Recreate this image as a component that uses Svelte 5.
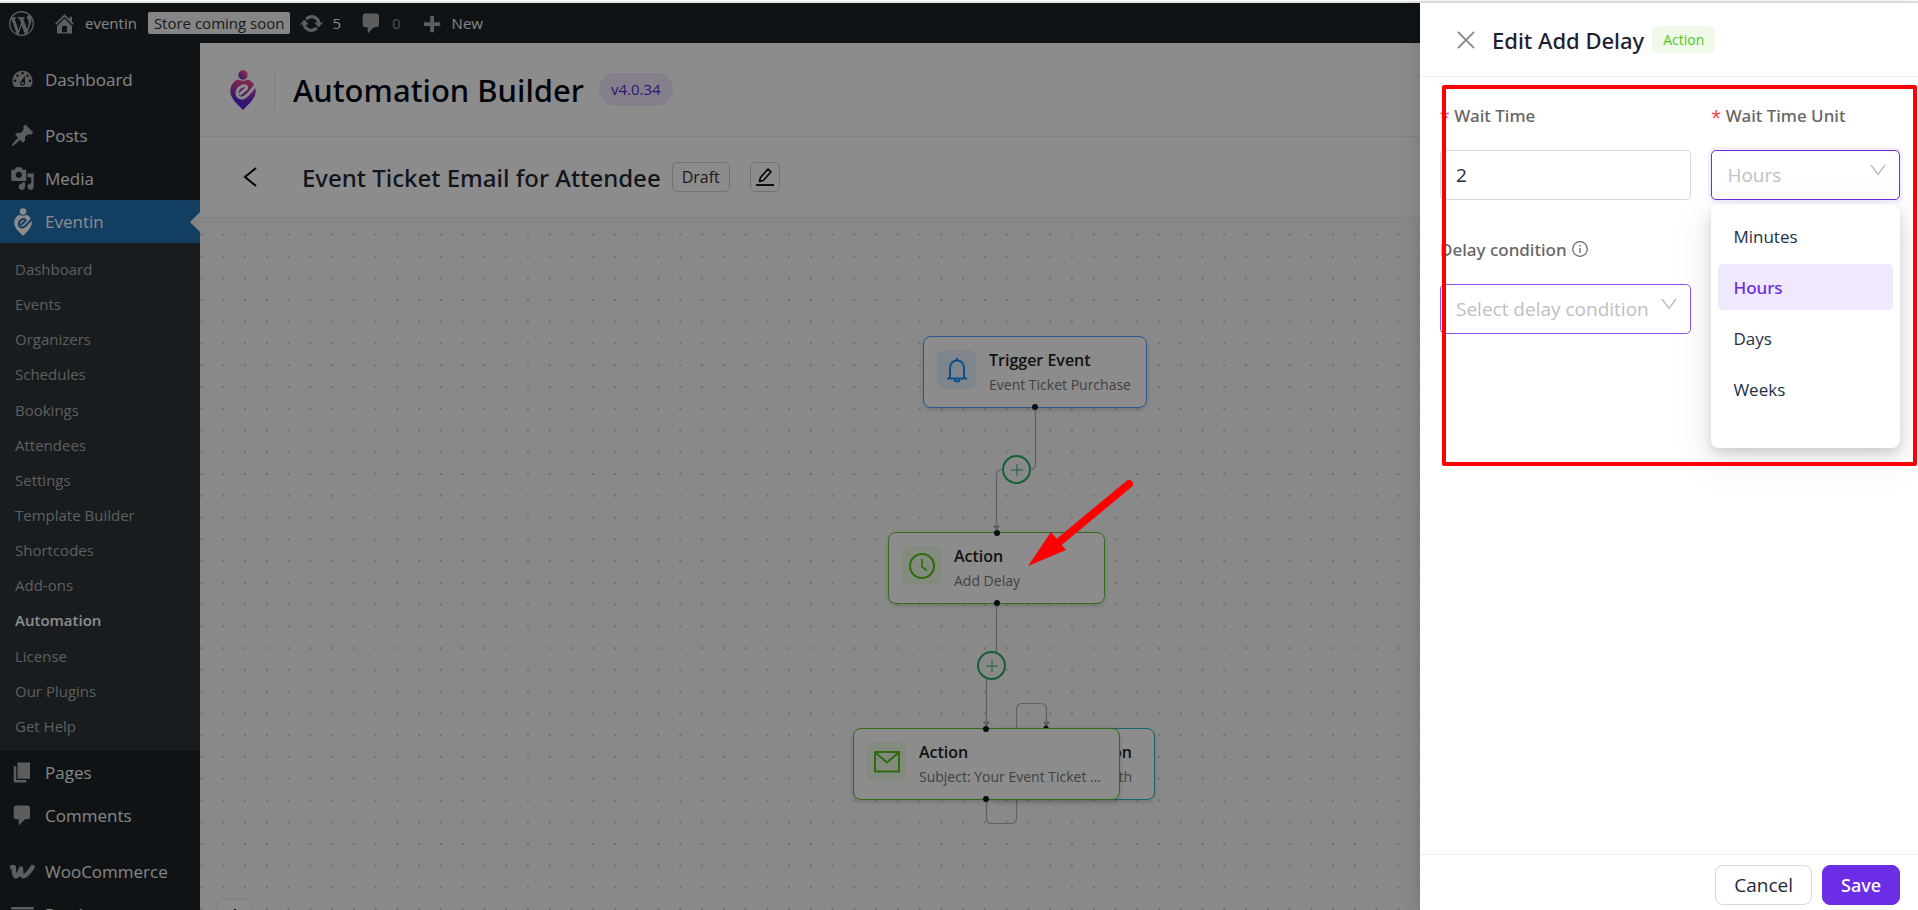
<script lang="ts">
	type NavItem = { label: string; icon: string; active?: boolean; gap?: boolean };

	const icons: Record<string, string> = {
		wordpress:
			'M20 10c0-5.51-4.49-10-10-10C4.48 0 0 4.49 0 10c0 5.52 4.48 10 10 10 5.51 0 10-4.48 10-10zM7.78 15.37L4.37 6.22c.55-.02 1.17-.08 1.17-.08.5-.06.44-1.13-.06-1.11 0 0-1.45.11-2.37.11-.18 0-.37 0-.58-.01C4.12 2.69 6.87 1.11 10 1.11c2.33 0 4.45.87 6.05 2.34-.68-.11-1.65.39-1.65 1.58 0 .74.45 1.36.9 2.1.35.61.55 1.36.55 2.46 0 1.49-1.4 5-1.4 5l-3.03-8.37c.54-.02.82-.17.82-.17.5-.05.44-1.25-.06-1.22 0 0-1.44.12-2.38.12-.87 0-2.33-.12-2.33-.12-.5-.03-.56 1.2-.06 1.22l.92.08 1.26 3.41zM17.41 10c.24-.64.74-1.87.43-4.25.7 1.29 1.05 2.71 1.05 4.25 0 3.29-1.73 6.24-4.4 7.78.97-2.59 1.94-5.2 2.92-7.78zM6.1 18.09C3.12 16.65 1.11 13.53 1.11 10c0-1.3.23-2.48.72-3.59C3.25 10.3 4.67 14.2 6.1 18.09zm4.03-6.63l2.58 6.98c-.86.29-1.76.45-2.71.45-.79 0-1.57-.11-2.29-.33.81-2.38 1.62-4.74 2.42-7.1z',
		home: 'M16 8.5l1.53 1.53-1.06 1.06L10 4.6l-6.47 6.49-1.06-1.06L10 2.5l4 4v-2h2v4zm-6-2.46l6 5.99V18H4v-5.97zM12 17v-5H8v5h4z',
		update:
			'M10.2 3.28c3.53 0 6.43 2.61 6.92 6h2.08l-3.5 4-3.5-4h2.32c-.45-1.97-2.21-3.45-4.32-3.45-1.45 0-2.73.71-3.54 1.78L4.95 5.66C6.23 4.2 8.11 3.28 10.2 3.28zm-.4 13.44c-3.52 0-6.43-2.61-6.92-6H.8l3.5-4c1.17 1.33 2.33 2.67 3.5 4H5.48c.45 1.97 2.21 3.45 4.32 3.45 1.45 0 2.73-.71 3.54-1.78l1.71 1.95c-1.28 1.46-3.15 2.38-5.25 2.38z',
		comments: 'M5 2h9c1.1 0 2 .9 2 2v7c0 1.1-.9 2-2 2h-2l-5 5v-5H5c-1.1 0-2-.9-2-2V4c0-1.1.9-2 2-2z',
		plus: 'M17 9v3h-5v5H9v-5H4V9h5V4h3v5h5z',
		dashboard:
			'M3.76 16h12.48A7.998 7.998 0 0 0 10 3a7.998 7.998 0 0 0-6.24 13zM10 4c.55 0 1 .45 1 1s-.45 1-1 1-1-.45-1-1 .45-1 1-1zM6 6c.55 0 1 .45 1 1s-.45 1-1 1-1-.45-1-1 .45-1 1-1zm8 0c.55 0 1 .45 1 1s-.45 1-1 1-1-.45-1-1 .45-1 1-1zm-5.37 5.55L12 7v6c0 1.1-.9 2-2 2s-2-.9-2-2c0-.57.24-1.08.63-1.45zM4 10c.55 0 1 .45 1 1s-.45 1-1 1-1-.45-1-1 .45-1 1-1zm12 0c.55 0 1 .45 1 1s-.45 1-1 1-1-.45-1-1 .45-1 1-1zm-5 3c0-.55-.45-1-1-1s-1 .45-1 1 .45 1 1 1 1-.45 1-1z',
		posts: 'M10.44 3.02l1.82-1.82 6.36 6.35-1.83 1.82c-1.05-.68-2.48-.57-3.41.36l-.75.75c-.92.93-1.04 2.35-.35 3.41l-1.83 1.82-2.41-2.41-2.8 2.79c-.42.42-3.38 2.71-3.8 2.29s1.86-3.39 2.28-3.81l2.79-2.79L4.1 9.36l1.83-1.82c1.05.69 2.48.57 3.4-.36l.75-.75c.93-.92 1.05-2.35.36-3.41z',
		media: 'M13 11V4c0-.55-.45-1-1-1h-1.67L9 1H5L3.67 3H2c-.55 0-1 .45-1 1v7c0 .55.45 1 1 1h10c.55 0 1-.45 1-1zM7 4.5c1.38 0 2.5 1.12 2.5 2.5S8.38 9.5 7 9.5 4.5 8.38 4.5 7 5.62 4.5 7 4.5zM14 6h5v10.5c0 1.38-1.12 2.5-2.5 2.5S14 17.88 14 16.5s1.12-2.5 2.5-2.5c.17 0 .34.02.5.05V9h-3V6zm-4 8.05V13h2v3.5c0 1.38-1.12 2.5-2.5 2.5S7 17.88 7 16.5 8.12 14 9.5 14c.17 0 .34.02.5.05z',
		pages: 'M6 15V2h10v13H6zm-1 1h8v2H3V5h2v11z',
		products: 'M19 4v2H1V4h18zM2 7h16v10H2V7zm11 3V9H7v1h6z'
	};

	const topNav: NavItem[] = [
		{ label: 'Dashboard', icon: 'dashboard' },
		{ label: 'Posts', icon: 'posts', gap: true },
		{ label: 'Media', icon: 'media' },
		{ label: 'Eventin', icon: 'eventin', active: true }
	];

	const bottomNav: NavItem[] = [
		{ label: 'Pages', icon: 'pages' },
		{ label: 'Comments', icon: 'comments' },
		{ label: 'WooCommerce', icon: 'woo', gap: true },
		{ label: 'Products', icon: 'products' }
	];

	const subNav = [
		'Dashboard',
		'Events',
		'Organizers',
		'Schedules',
		'Bookings',
		'Attendees',
		'Settings',
		'Template Builder',
		'Shortcodes',
		'Add-ons',
		'Automation',
		'License',
		'Our Plugins',
		'Get Help'
	];

	// positions are in canvas coordinates
	const nodes = [
		{ x: 723, y: 118, w: 224, kind: 'trigger', title: 'Trigger Event', text: 'Event Ticket Purchase' },
		{ x: 688, y: 314, w: 217, kind: 'delay', title: 'Action', text: 'Add Delay' },
		{ x: 790, y: 510, w: 165, kind: 'condition', title: 'Condition', text: 'Check both' },
		{ x: 653, y: 510, w: 267, kind: 'email', title: 'Action', text: 'Subject: Your Event Ticket Purchase' }
	];

	const handles = [
		[835, 189],
		[797, 315],
		[797, 385],
		[786, 511],
		[786, 581]
	];

	const adders = [
		[816, 251],
		[791, 447]
	];

	const units = ['Minutes', 'Hours', 'Days', 'Weeks'];

	let waitTime = $state('2');
	let unit = $state('Hours');
	let condition = $state('');
	let unitOpen = $state(true);
	let drawerOpen = $state(true);

	function pick(value: string) {
		unit = value;
		unitOpen = false;
	}
</script>

{#snippet brand()}
	<circle class="brand-dot" cx="13" cy="5" r="4.700" />
	<path
		class="brand-pin"
		d="M13 40C8 34.500 .3 29 .3 21C.3 15.500 3.500 11.500 7.800 9.500C11 11.300 15 11.300 18.200 9.500C22.500 11.500 25.700 15.500 25.700 21C25.700 29 18 34.500 13 40Z" />
	<path
		class="brand-cut"
		fill="none"
		stroke-width="3"
		stroke-linejoin="round"
		d="M9.500 24.500L16.500 18.500Q17.500 15.500 13.500 15.800Q7.500 17.300 7 23Q7.500 28.500 12.500 28Q16 27 20.500 21.500L26 15" />
{/snippet}

{#snippet icon(name: string)}
	{#if name === 'eventin'}
		<svg viewBox="0 0 26 40" width="18" height="28" aria-hidden="true">{@render brand()}</svg>
	{:else if name === 'woo'}
		<svg viewBox="0 0 25 16" width="25" height="16" aria-hidden="true">
			<path
				d="M2 3.200H3.800Q3.600 12 6 12.500Q8 12.500 11 4.500Q10.800 12 13.500 12.300Q16.500 12 22.500 3.200"
				fill="none"
				stroke="currentColor"
				stroke-width="4.500"
				stroke-linecap="round"
				stroke-linejoin="round" />
		</svg>
	{:else}
		<svg viewBox="0 0 20 20" width="25" height="25" aria-hidden="true"><path d={icons[name]} /></svg>
	{/if}
{/snippet}

{#snippet navItem(item: NavItem)}
	<li class:gap={item.gap}>
		<a href="#{item.label}" class="nav-item" class:active={item.active}>
			<span class="nav-icon">{@render icon(item.icon)}</span>
			{item.label}
		</a>
	</li>
{/snippet}

{#snippet chevron()}
	<svg class="chevron" viewBox="0 0 16 12" width="16" height="12" aria-hidden="true">
		<path d="M1 1L8 10.500L15 1" fill="none" stroke="currentColor" stroke-width="1.500" />
	</svg>
{/snippet}

<div class="screen">
	<div class="admin">
		<header class="adminbar">
			<a href="#about" aria-label="About WordPress">{@render icon('wordpress')}</a>
			<a href="#site" class="site">{@render icon('home')} eventin</a>
			<a href="#store" class="store">Store coming soon</a>
			<a href="#updates" class="updates">{@render icon('update')} 5</a>
			<a href="#comments" class="count">{@render icon('comments')} <span>0</span></a>
			<a href="#new" class="new">{@render icon('plus')} New</a>
		</header>

		<div class="columns">
			<nav class="sidebar">
				<ul>
					{#each topNav as item}
						{@render navItem(item)}
					{/each}
				</ul>
				<ul class="subnav">
					{#each subNav as label}
						<li><a href="#{label}" class:current={label === 'Automation'}>{label}</a></li>
					{/each}
				</ul>
				<ul>
					{#each bottomNav as item}
						{@render navItem(item)}
					{/each}
				</ul>
			</nav>

			<main>
				<header class="app-header">
					<svg class="logo" viewBox="0 0 26 40" width="26" height="40" aria-hidden="true">
						<defs>
							<linearGradient id="dot" x1="1" y1="0" x2="0" y2="1">
								<stop offset="0.200" stop-color="#ff4f86" />
								<stop offset="1" stop-color="#5a2be8" />
							</linearGradient>
							<linearGradient id="pin" gradientUnits="userSpaceOnUse" x1="17" y1="8" x2="12" y2="38">
								<stop offset="0" stop-color="#ff4f7d" />
								<stop offset="0.800" stop-color="#5b24d8" />
							</linearGradient>
						</defs>
						{@render brand()}
					</svg>
					<span class="divider"></span>
					<h1>Automation Builder</h1>
					<span class="version">v4.0.34</span>
				</header>

				<div class="flow-bar">
					<button class="back" aria-label="Back">
						<svg viewBox="0 0 14 20" width="14" height="20">
							<path d="M13 1L2 10L13 19" fill="none" stroke="currentColor" stroke-width="2" />
						</svg>
					</button>
					<h2>Event Ticket Email for Attendee</h2>
					<span class="draft">Draft</span>
					<button class="edit" aria-label="Rename">
						<svg viewBox="0 0 20 20" width="20" height="20">
							<path
								d="M4.500 14.500L5.300 10.800L13 2L16 4.800L8.300 13.500Z"
								fill="none"
								stroke="currentColor"
								stroke-width="1.600"
								stroke-linejoin="round" />
							<path d="M1 18H19" stroke="currentColor" stroke-width="1.800" />
						</svg>
					</button>
				</div>

				<div class="canvas">
					<svg class="layer" aria-hidden="true">
						<defs>
							<pattern id="grid" width="21.760" height="21.760" patternUnits="userSpaceOnUse" x="-9.300" y="5.800">
								<circle cx="10.880" cy="10.880" r="0.700" fill="#77777f" />
							</pattern>
						</defs>
						<rect width="100%" height="100%" fill="url(#grid)" />
						<g class="edges">
							<path d="M835.500 190V246Q835.500 251.500 830 251.500H802Q796.500 251.500 796.500 257V312" />
							<path d="M796.500 386V448H786.500V508" />
							<path
								d="M786.500 581V600Q786.500 605.500 792 605.500H811Q816.500 605.500 816.500 600V491Q816.500 485.500 822 485.500H840Q846.500 485.500 846.500 491V504" />
						</g>
						<g class="tips">
							<path d="M793.500 308H799.500L796.500 312Z" />
							<path d="M783.500 504H789.500L786.500 508Z" />
							<path d="M843.500 504H849.500L846.500 508Z" />
						</g>
						<circle cx="846" cy="510" r="2.500" fill="#16161f" />
					</svg>

					{#each nodes as node}
						<article class="node {node.kind}" style="left: {node.x}px; top: {node.y}px; width: {node.w}px;">
							<span class="node-icon">
								{#if node.kind === 'trigger'}
									<svg viewBox="0 0 20 26" width="20" height="26">
										<path d="M10 1V4M3 21V10.500A7 7 0 0 1 17 10.500V21M0 21.500H20" />
										<path d="M7.500 22A2.500 2.500 0 0 0 12.500 22" />
									</svg>
								{:else if node.kind === 'delay'}
									<svg viewBox="0 0 26 26" width="26" height="26">
										<circle cx="13" cy="13" r="12" />
										<path d="M13 6V14L18 17.500" stroke-width="1.600" />
									</svg>
								{:else if node.kind === 'email'}
									<svg viewBox="0 0 26 22" width="26" height="22">
										<path d="M1 1H25V20.500H1ZM2 2L13 11.500L24 2" />
									</svg>
								{/if}
							</span>
							<div class="node-text">
								<strong>{node.title}</strong>
								<small>{node.text}</small>
							</div>
						</article>
					{/each}

					{#each handles as [x, y]}
						<span class="handle" style="left: {x}px; top: {y}px;"></span>
					{/each}

					{#each adders as [x, y]}
						<button class="add" style="left: {x}px; top: {y}px;" aria-label="Add step">
							<svg viewBox="0 0 12 12" width="12" height="12"><path d="M6 0V12M0 6H12" stroke="currentColor" /></svg>
						</button>
					{/each}

					<button class="zoom-in" aria-label="Zoom in">
						<svg viewBox="0 0 12 12" width="14" height="14">
							<path d="M6 0V12M0 6H12" stroke="currentColor" stroke-width="2" />
						</svg>
					</button>
				</div>
			</main>
		</div>
	</div>

	{#if drawerOpen}
		<div class="mask"></div>

		<svg class="pointer" viewBox="0 0 110 90" width="110" height="90" aria-hidden="true">
			<path d="M105 8L35 66" stroke="#f00" stroke-width="8" stroke-linecap="round" />
			<path d="M4 90L27 56L42 74Z" fill="#f00" />
		</svg>

		<aside class="drawer">
			<header>
				<button class="close" aria-label="Close" onclick={() => (drawerOpen = false)}>
					<svg viewBox="0 0 18 18" width="18" height="18">
						<path d="M1 1L17 17M17 1L1 17" stroke="currentColor" stroke-width="1.800" />
					</svg>
				</button>
				<h2>Edit Add Delay</h2>
				<span class="tag">Action</span>
			</header>

			<form class="fields">
				<div class="field">
					<label for="wait-time"><span class="star">*</span>Wait Time</label>
					<input id="wait-time" type="text" bind:value={waitTime} />
				</div>

				<div class="field">
					<label for="wait-unit"><span class="star">*</span>Wait Time Unit</label>
					<div class="picker">
						<button
							type="button"
							id="wait-unit"
							class="select-box"
							class:focused={unitOpen}
							aria-haspopup="listbox"
							aria-expanded={unitOpen}
							onclick={() => (unitOpen = !unitOpen)}>
							{unit}
						</button>
						{@render chevron()}
						{#if unitOpen}
							<ul class="options" role="listbox">
								{#each units as option}
									<li role="option" aria-selected={option === unit}>
										<button type="button" class:selected={option === unit} onclick={() => pick(option)}>{option}</button>
									</li>
								{/each}
							</ul>
						{/if}
					</div>
				</div>

				<div class="field">
					<label for="condition">
						Delay condition
						<svg viewBox="0 0 16 16" width="16" height="16" aria-hidden="true">
							<circle cx="8" cy="8" r="7.300" fill="none" stroke="currentColor" stroke-width="1.200" />
							<path d="M8 7V12M8 4V5.500" stroke="currentColor" stroke-width="1.300" />
						</svg>
					</label>
					<div class="picker">
						<select id="condition" class="select-box" bind:value={condition}>
							<option value="">Select delay condition</option>
						</select>
						{@render chevron()}
					</div>
				</div>

				<div class="highlight"></div>
			</form>

			<footer>
				<button class="cancel" onclick={() => (drawerOpen = false)}>Cancel</button>
				<button class="save">Save</button>
			</footer>
		</aside>
	{/if}
</div>

<style>
	:global(body) {
		margin: 0;
		overflow: hidden;
	}

	.screen {
		position: relative;
		box-sizing: border-box;
		height: 100vh;
		padding-top: 3px;
		overflow: hidden;
		background: linear-gradient(#fdfdfd 1px, #e2e4e3 1px);
		font-family: 'Open Sans', 'Noto Sans', sans-serif;
		color: #1d2327;
	}

	.screen *,
	.screen *::before,
	.screen *::after {
		box-sizing: border-box;
	}

	ul {
		margin: 0;
		padding: 0;
		list-style: none;
	}

	h1,
	h2 {
		margin: 0;
		font-family: 'Noto Sans', 'Open Sans', sans-serif;
		font-weight: 500;
	}

	a {
		color: inherit;
		text-decoration: none;
	}

	button {
		font: inherit;
		cursor: pointer;
	}

	svg {
		flex: none;
		fill: currentColor;
	}

	.admin {
		display: flex;
		flex-direction: column;
		height: 100%;
	}

	/* admin bar */

	.adminbar {
		display: flex;
		align-items: center;
		flex: none;
		height: 40px;
		padding-left: 9px;
		background: #1d2327;
		color: #f0f0f1;
		font-size: 15px;
	}

	.adminbar a {
		display: flex;
		align-items: center;
		gap: 8px;
	}

	.adminbar svg {
		color: #a7aaad;
	}

	.adminbar .site {
		margin-left: 18px;
	}

	.adminbar .store {
		height: 22px;
		margin-left: 11px;
		padding: 0 6px;
		border-radius: 2px;
		background: #f0f2f0;
		color: #2c3338;
	}

	.adminbar .updates {
		margin-left: 9px;
	}

	.adminbar .count {
		margin-left: 18px;
	}

	.adminbar .count span {
		color: #8c8f94;
	}

	.adminbar .new {
		margin-left: 18px;
	}

	.columns {
		display: flex;
		flex: 1;
		min-height: 0;
	}

	/* sidebar */

	.sidebar {
		flex: none;
		width: 200px;
		padding-top: 15px;
		background: #1d2327;
		color: #f0f0f1;
		overflow: hidden;
	}

	.gap {
		margin-top: 13px;
	}

	.nav-item {
		position: relative;
		display: flex;
		align-items: center;
		gap: 10px;
		height: 43px;
		padding-left: 10px;
		font-size: 17px;
	}

	.nav-icon {
		display: flex;
		justify-content: center;
		width: 25px;
		color: #a7aaad;
	}

	.nav-item.active {
		background: #2271b1;
		color: #fff;
	}

	.active .nav-icon {
		color: #fff;
	}

	.brand-cut {
		stroke: #2271b1;
	}

	.nav-item.active::after {
		content: '';
		position: absolute;
		right: 0;
		border: 10px solid transparent;
		border-right-color: #f0f0f1;
		border-left-width: 0;
	}

	.subnav {
		display: flex;
		flex-direction: column;
		justify-content: space-between;
		min-height: 508px;
		padding: 9px 0 7px;
		background: #2c3338;
		color: #a9acaf;
		font-size: 15px;
	}

	.subnav a {
		display: block;
		padding-left: 15px;
		line-height: 35px;
	}

	.subnav .current {
		color: #fff;
		font-weight: 600;
	}

	/* main column */

	main {
		display: flex;
		flex: 1;
		flex-direction: column;
		min-width: 0;
		background: #fff;
	}

	.app-header {
		display: flex;
		align-items: center;
		flex: none;
		height: 94px;
		padding-left: 30px;
		border-bottom: 1px solid #eeeeee;
	}

	.logo .brand-dot {
		fill: url(#dot);
	}

	.logo .brand-pin {
		fill: url(#pin);
	}

	.logo .brand-cut {
		stroke: #fff;
	}

	.divider {
		width: 1px;
		height: 40px;
		margin: 0 18px;
		background: #e8e8e8;
	}

	h1 {
		color: #020617;
		font-size: 31px;
	}

	.version {
		margin-left: 15px;
		padding: 0 12px;
		border-radius: 17px;
		background: #f0e8fd;
		color: #5030d8;
		font-size: 15px;
		line-height: 33px;
	}

	.flow-bar {
		display: flex;
		align-items: center;
		flex: none;
		height: 81px;
		padding-left: 36px;
		border-bottom: 1px solid #e8eaec;
	}

	.back,
	.edit,
	.close,
	.add,
	.zoom-in {
		display: flex;
		align-items: center;
		justify-content: center;
		padding: 0;
		border: 0;
		background: none;
	}

	.back {
		width: 28px;
		height: 32px;
	}

	.flow-bar h2 {
		margin-left: 38px;
		color: #1f2937;
		font-size: 24px;
	}

	.draft {
		margin-left: 11px;
		padding: 0 9px;
		border: 1px solid #d0d0d0;
		border-radius: 5px;
		color: #333;
		font-size: 16px;
		line-height: 28px;
	}

	.edit {
		width: 30px;
		height: 30px;
		margin-left: 20px;
		border: 1px solid #d0d0d0;
		border-radius: 5px;
	}

	.canvas {
		position: relative;
		flex: 1;
		min-height: 0;
		overflow: hidden;
		background: #f9fafb;
	}

	.layer {
		position: absolute;
		inset: 0;
		width: 100%;
		height: 100%;
	}

	.edges {
		fill: none;
		stroke: #b1b1b7;
		stroke-width: 1.2;
	}

	.tips {
		fill: #b1b1b7;
		stroke: #b1b1b7;
	}

	.node {
		position: absolute;
		display: flex;
		gap: 13px;
		height: 72px;
		padding: 13px;
		border: 1px solid #62c52a;
		border-radius: 8px;
		background: #fff;
		box-shadow: 0 2px 5px rgba(0, 0, 0, 0.15);
	}

	.node.trigger {
		border-color: #4aa4ff;
	}

	.node.condition {
		justify-content: flex-end;
		padding-right: 22px;
		border-color: #28b8c8;
	}

	.node-icon {
		display: flex;
		align-items: center;
		justify-content: center;
		flex: none;
		width: 39px;
		height: 39px;
		border-radius: 8px;
		background: #eefbe6;
		color: #52c41a;
	}

	.trigger .node-icon {
		background: #e6f2ff;
		color: #1890ff;
	}

	.condition .node-icon {
		background: #e6fafb;
	}

	.node-icon svg {
		fill: none;
		stroke: currentColor;
		stroke-width: 2;
	}

	.node-text {
		display: flex;
		flex-direction: column;
		min-width: 0;
	}

	.condition .node-text {
		text-align: right;
	}

	.node-text strong {
		color: #1f1f1f;
		font-size: 16px;
		font-weight: 600;
		line-height: 20px;
	}

	.node-text small {
		overflow: hidden;
		color: #777;
		font-size: 14px;
		line-height: 30px;
		text-overflow: ellipsis;
		white-space: nowrap;
	}

	.handle {
		position: absolute;
		width: 6px;
		height: 6px;
		margin: -3px;
		border-radius: 50%;
		background: #16161f;
	}

	.add {
		position: absolute;
		width: 29px;
		height: 29px;
		margin: -14px;
		border: 2px solid #27ae60;
		border-radius: 50%;
		background: #f9fafb;
		color: #27ae60;
	}

	.zoom-in {
		position: absolute;
		left: 18px;
		bottom: -22px;
		width: 33px;
		height: 32px;
		background: #fefefe;
		box-shadow: 0 0 2px rgba(0, 0, 0, 0.2);
		color: #222;
	}

	/* drawer */

	.mask {
		position: absolute;
		inset: 3px 0 0;
		background: rgba(0, 0, 0, 0.45);
	}

	.pointer {
		position: absolute;
		left: 1024px;
		top: 476px;
	}

	.drawer {
		position: absolute;
		inset: 3px 0 0 auto;
		display: flex;
		flex-direction: column;
		width: 498px;
		background: #fff;
		box-shadow: -6px 0 16px rgba(0, 0, 0, 0.1);
	}

	.drawer header {
		display: flex;
		align-items: center;
		flex: none;
		height: 74px;
		padding: 0 30px 0 37px;
		border-bottom: 1px solid #f0f0f0;
	}

	.close {
		color: #8c8c90;
	}

	.drawer h2 {
		margin-left: 17px;
		color: #1f1f33;
		font-size: 22px;
	}

	.tag {
		margin-left: 8px;
		padding: 0 11px;
		border-radius: 5px;
		background: #f0faeb;
		color: #52c41a;
		font-size: 14px;
		line-height: 27px;
	}

	.fields {
		position: relative;
		display: grid;
		grid-template-columns: 4fr 3fr;
		align-content: start;
		gap: 35px 20px;
		flex: 1;
		padding: 24px 18px 0 20px;
	}

	.field {
		display: flex;
		flex-direction: column;
		gap: 21px;
		min-width: 0;
	}

	.field label {
		display: flex;
		align-items: center;
		gap: 5px;
		height: 28px;
		color: #666;
		font-family: 'Noto Sans', 'Open Sans', sans-serif;
		font-size: 17px;
		font-weight: 500;
	}

	.star {
		padding-top: 8px;
		color: #ff4d4f;
		font-family: 'Liberation Sans', sans-serif;
		font-size: 24px;
		font-weight: 400;
		line-height: 24px;
	}

	.field input,
	.select-box {
		display: block;
		width: 100%;
		height: 50px;
		padding: 0 15px;
		border: 1px solid #d9d9d9;
		border-radius: 5px;
		outline: none;
		background: #fff;
		color: #1f2937;
		font-family: inherit;
		font-size: 19px;
		text-align: left;
	}

	.picker {
		position: relative;
	}

	.select-box {
		appearance: none;
		border-color: #8f52f0;
		color: #bfbfbf;
	}

	.select-box.focused {
		border-color: #6b2de5;
		box-shadow: 0 0 0 3px #f4eefe;
	}

	.chevron {
		position: absolute;
		top: 14px;
		right: 14px;
		color: #bfbfbf;
		pointer-events: none;
	}

	.options {
		position: absolute;
		top: 55px;
		left: 0;
		right: 0;
		display: flex;
		flex-direction: column;
		gap: 5px;
		padding: 8px 7px 36px;
		border-radius: 8px;
		background: #fff;
		box-shadow:
			0 8px 20px rgba(0, 0, 0, 0.1),
			0 4px 8px rgba(0, 0, 0, 0.08),
			0 10px 40px 8px rgba(0, 0, 0, 0.05);
	}

	.options button {
		width: 100%;
		height: 46px;
		padding: 0 15px;
		border: 0;
		border-radius: 5px;
		background: none;
		color: #243046;
		font-size: 17px;
		text-align: left;
	}

	.options .selected {
		background: #f0e8fc;
		color: #6b2de5;
		font-family: 'Noto Sans', 'Open Sans', sans-serif;
		font-weight: 500;
	}

	.highlight {
		position: absolute;
		inset: 8px 1px auto 22px;
		height: 381px;
		border: 4px solid #f00;
		border-radius: 2px;
		pointer-events: none;
	}

	.drawer footer {
		display: flex;
		justify-content: flex-end;
		gap: 10px;
		flex: none;
		padding: 10px 18px 5px;
		border-top: 1px solid #f0f0f0;
	}

	.drawer footer button {
		height: 40px;
		padding: 0 18px;
		border: 1px solid #d9d9d9;
		border-radius: 8px;
		background: #fff;
		color: #1f2937;
		font-size: 19px;
	}

	.drawer footer .save {
		border-color: #6b2de5;
		background: #6b2de5;
		color: #fff;
		font-family: 'Noto Sans', 'Open Sans', sans-serif;
		font-size: 18px;
		font-weight: 500;
	}
</style>
